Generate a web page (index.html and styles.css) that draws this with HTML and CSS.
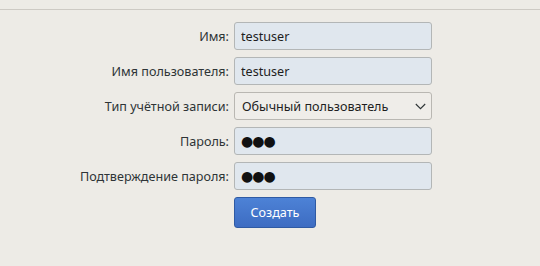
FILE: index.html
```html
<!DOCTYPE html>
<html lang="ru">
<head>
  <meta charset="UTF-8">
  <title>Пользователи</title>
  <link rel="stylesheet" href="styles.css">
</head>
<body>
  <div class="top-line"></div>

  <!-- Форма нового пользователя -->
  <form class="user-form">
    <label class="field-label" for="name">Имя:</label>
    <input class="field" id="name" type="text" value="testuser">

    <label class="field-label" for="login">Имя пользователя:</label>
    <input class="field" id="login" type="text" value="testuser">

    <label class="field-label" for="type">Тип учётной записи:</label>
    <div class="select" id="type">
      <span>Обычный пользователь</span>
      <svg class="chevron" width="11" height="7" viewBox="0 0 11 7"><path d="M0.8 1 L5.5 5.7 L10.2 1" fill="none" stroke="#2e3436" stroke-width="1.1"/></svg>
    </div>

    <label class="field-label" for="pass">Пароль:</label>
    <div class="field dots" id="pass">●●●</div>

    <label class="field-label" for="pass2">Подтверждение пароля:</label>
    <div class="field dots" id="pass2">●●●</div>

    <span></span>
    <div><button type="button" class="btn-create">Создать</button></div>
  </form>
</body>
</html>
```

FILE: styles.css
```css
* {
  margin: 0;
  padding: 0;
  box-sizing: border-box;
}
body {
  background: #edebe6;
  font-family: "Noto Sans", "Open Sans", sans-serif;
  font-size: 12.6px;
  color: #2e3436;
}

.top-line {
  height: 10px;
  border-bottom: 1px solid #cdcac4;
}

/* Форма */
.user-form {
  display: grid;
  grid-template-columns: 229px 198px;
  column-gap: 5px;
  row-gap: 7px;
  padding-top: 12px;
}
.field-label {
  text-align: right;
  align-self: center;
}
.field {
  height: 28px;
  border: 1px solid #b3b6b6;
  border-radius: 3px;
  background: #e0e7ee;
  padding: 0 6px;
  font: inherit;
  color: #1e1e1e;
  display: flex;
  align-items: center;
}
.dots {
  font-size: 14px;
  color: #111;
  letter-spacing: -1px;
  font-family: "DejaVu Sans", sans-serif;
}
.select {
  height: 28px;
  border: 1px solid #b9b7b2;
  border-radius: 3px;
  background: #efede9;
  padding: 0 5px 0 7px;
  display: flex;
  align-items: center;
  justify-content: space-between;
  color: #1e1e1e;
}
.btn-create {
  width: 82px;
  height: 31px;
  border: 1px solid #2f5aa3;
  border-radius: 3px;
  background: linear-gradient(#4d82d6, #3d6cc2);
  color: #fff;
  font: inherit;
}
```
